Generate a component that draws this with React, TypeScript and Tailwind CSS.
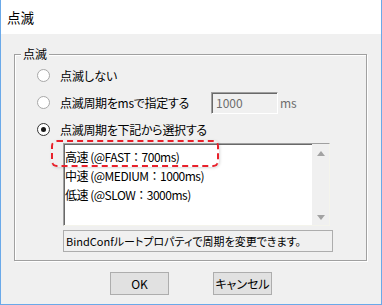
import React from "react";

const font = '"Noto Sans CJK JP", "Liberation Sans", sans-serif';

function Radio({ checked }: { checked?: boolean }) {
  return (
    <span
      className={
        "flex h-[13px] w-[13px] shrink-0 items-center justify-center rounded-full border bg-white " +
        (checked ? "border-[#333333]" : "border-[#a8a8a8]")
      }
    >
      {checked && <span className="h-[5px] w-[5px] rounded-full bg-[#1a1a1a]" />}
    </span>
  );
}

export default function App() {
  return (
    <div
      className="flex h-[305px] w-[382px] flex-col border-x border-b border-[#6aa9e9] bg-[#f0f0f0] text-[12px] leading-[16px] text-black [font-feature-settings:'palt']"
      style={{ fontFamily: font }}
    >
      <div className="flex h-[34px] shrink-0 items-center bg-white pl-[6px] text-[13.5px]">点滅</div>

      <div className="relative ml-[13px] mt-[20px] w-[353px] border border-[#a0a0a0] pb-[8px] pt-[7px] shadow-[inset_1px_1px_0_#ffffff,1px_1px_0_#ffffff]">
        <span className="absolute left-[6px] top-[-9px] bg-[#f0f0f0] px-[2px] leading-[16px]">点滅</span>

        <div className="flex h-[27px] items-center pl-[22px]">
          <Radio />
          <span className="ml-[10px] whitespace-nowrap">点滅しない</span>
        </div>

        <div className="flex h-[27px] items-center pl-[22px]">
          <Radio />
          <span className="ml-[10px] w-[151px] whitespace-nowrap tracking-[-0.3px]">点滅周期をmsで指定する</span>
          <div className="flex h-[22px] w-[67px] items-center border border-b-white border-l-[#a0a0a0] border-r-white border-t-[#a0a0a0] bg-[#f0f0f0] pl-[4px] text-[#6d6d6d] shadow-[inset_1px_1px_0_#696969]">
            1000
          </div>
          <span className="ml-[2px] text-[#6d6d6d]">ms</span>
        </div>

        <div className="flex h-[27px] items-center pl-[22px]">
          <Radio checked />
          <span className="ml-[10px] whitespace-nowrap tracking-[-0.3px]">点滅周期を下記から選択する</span>
        </div>

        <div className="relative ml-[48px] flex h-[83px] w-[267px] border border-b-[#f4f4ec] border-l-[#a0a0a0] border-r-[#f4f4ec] border-t-[#a0a0a0] bg-white shadow-[inset_1px_1px_0_#696969]">
          <div className="flex flex-1 flex-col pl-[1px] pt-[3px] tracking-[-0.5px] [font-feature-settings:normal]">
            <div className="flex h-[19px] items-center whitespace-nowrap">高速 (@FAST：700ms)</div>
            <div className="flex h-[19px] items-center whitespace-nowrap">中速 (@MEDIUM：1000ms)</div>
            <div className="flex h-[19px] items-center whitespace-nowrap">低速 (@SLOW：3000ms)</div>
          </div>
          <div className="flex w-[17px] flex-col items-center justify-between bg-[#f0f0f0] pb-[5px] pt-[7px]">
            <svg width="8" height="5" viewBox="0 0 8 5">
              <path d="M0 5 L4 0 L8 5 Z" fill="#a3a3a3" />
            </svg>
            <svg width="8" height="5" viewBox="0 0 8 5">
              <path d="M0 0 L4 5 L8 0 Z" fill="#a3a3a3" />
            </svg>
          </div>
          <div className="pointer-events-none absolute left-[-13px] top-[-4px] h-[27px] w-[168px] rounded-[6px] border-2 border-dashed border-[#e8212b] shadow-[1px_1px_3px_rgba(0,0,0,0.15)]" />
        </div>

        <div className="ml-[48px] mt-[4px] flex h-[22px] w-[270px] items-center whitespace-nowrap border border-[#adadad] pl-[2px] text-[11px]">
          BindConfルートプロパティで周期を変更できます。
        </div>
      </div>

      <div className="mt-[11px] flex justify-center gap-[44px]">
        <button className="flex h-[23px] w-[59px] items-center justify-center whitespace-nowrap border border-[#adadad] bg-[#e1e1e1]">
          OK
        </button>
        <button className="flex h-[23px] w-[59px] items-center justify-center whitespace-nowrap border border-[#adadad] bg-[#e1e1e1]">
          キャンセル
        </button>
      </div>
    </div>
  );
}
